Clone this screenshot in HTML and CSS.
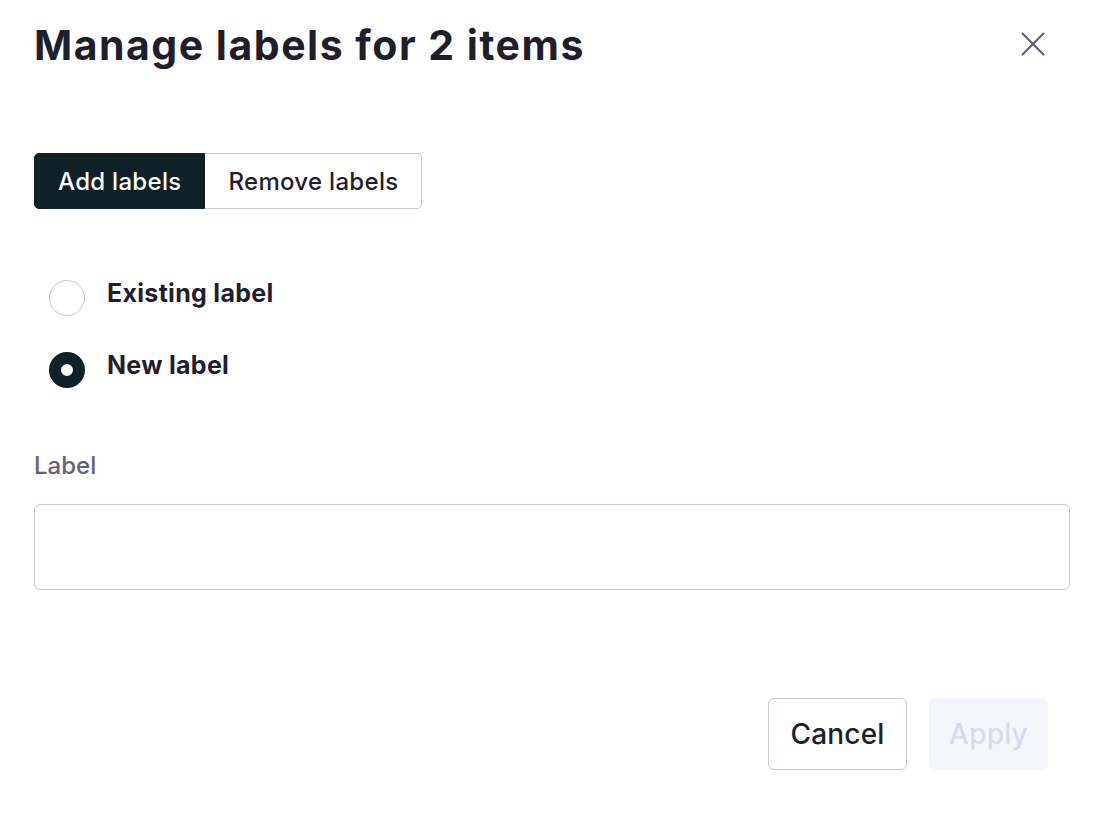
FILE: index.html
```html
<!DOCTYPE html>
<html lang="en">
<head>
    <meta charset="UTF-8">
    <title>Manage labels</title>
    <link rel="stylesheet" href="styles.css">
</head>
<body>
    <div class="modal">
        <!-- Header -->
        <div class="modal-header">
            <h1>Manage labels for 2 items</h1>
            <button class="close-btn" aria-label="Close">
                <svg width="24" height="24" viewBox="0 0 24 24" fill="none" stroke="currentColor" stroke-width="2" stroke-linecap="round">
                    <path d="M1.5 1.5L22.5 22.5M22.5 1.5L1.5 22.5"/>
                </svg>
            </button>
        </div>

        <!-- Mode toggle -->
        <div class="segmented">
            <button class="seg-btn active">Add labels</button>
            <button class="seg-btn">Remove labels</button>
        </div>

        <!-- Radio options -->
        <div class="radio-group">
            <label class="radio-row">
                <input type="radio" name="kind" class="radio">
                <span>Existing label</span>
            </label>
            <label class="radio-row">
                <input type="radio" name="kind" class="radio" checked>
                <span>New label</span>
            </label>
        </div>

        <!-- Label field -->
        <div class="field">
            <label for="labelInput" class="field-label">Label</label>
            <input type="text" id="labelInput" class="text-input">
        </div>

        <!-- Footer -->
        <div class="modal-footer">
            <button class="cancel-btn">Cancel</button>
            <button class="apply-btn" disabled>Apply</button>
        </div>
    </div>
</body>
</html>
```

FILE: styles.css
```css
/* General Reset */
* {
    margin: 0;
    padding: 0;
    box-sizing: border-box;
    font-family: 'Inter', 'Liberation Sans', sans-serif;
}

body, html {
    height: 100%;
    background: #ffffff;
    color: #1f1e2e;
}

.modal {
    width: 1112px;
    padding: 14px 42px 0 34px;
}

/* Header */
.modal-header {
    display: flex;
    justify-content: space-between;
    align-items: center;
    height: 62px;
}

.modal-header h1 {
    font-size: 41px;
    font-weight: 700;
    letter-spacing: 1.5px;
    color: #1f1e2e;
}

.close-btn {
    display: flex;
    border: none;
    background: none;
    color: #5c5a7d;
    width: 24px;
    height: 24px;
    margin-right: 25px;
    margin-top: -2px;
    cursor: pointer;
}

/* Segmented toggle */
.segmented {
    display: inline-flex;
    margin-top: 77px;
}

.seg-btn {
    height: 56px;
    font-size: 24px;
    font-weight: 500;
    letter-spacing: 0.3px;
    color: #1f1e2e;
    background: #ffffff;
    border: 1px solid #c6c4d8;
    border-left: none;
    border-radius: 0 5px 5px 0;
    padding: 0 23px;
    cursor: pointer;
}

.seg-btn.active {
    background: #102228;
    color: #ffffff;
    border: 1px solid #102228;
    border-radius: 5px 0 0 5px;
}

/* Radios */
.radio-group {
    display: flex;
    flex-direction: column;
    gap: 36px;
    margin-top: 71px;
    padding-left: 15px;
}

.radio-row {
    display: flex;
    align-items: center;
    gap: 22px;
    font-size: 25px;
    font-weight: 700;
    letter-spacing: 0.3px;
    color: #1f1e2e;
    height: 36px;
}

.radio-row span {
    margin-top: -10px;
}

.radio {
    appearance: none;
    width: 36px;
    height: 36px;
    border-radius: 50%;
    border: 1px solid #c6c4d8;
    background: #ffffff;
}

.radio:checked {
    border: 12px solid #102228;
}

/* Field */
.field {
    margin-top: 63px;
    display: flex;
    flex-direction: column;
}

.field-label {
    font-size: 24px;
    font-weight: 500;
    color: #63617f;
    margin-bottom: 24px;
}

.text-input {
    width: 1036px;
    height: 86px;
    border: 1px solid #c6c4d8;
    border-radius: 6px;
    font-size: 22px;
    padding: 0 20px;
}

/* Footer */
.modal-footer {
    display: flex;
    justify-content: flex-end;
    gap: 22px;
    margin-top: 108px;
    padding-right: 22px;
}

.cancel-btn, .apply-btn {
    height: 72px;
    font-size: 28px;
    font-weight: 500;
    letter-spacing: 0.2px;
    border-radius: 6px;
    padding: 0 20px;
}

.cancel-btn {
    background: #ffffff;
    color: #1f1e2e;
    border: 1px solid #c6c4d8;
    width: 139px;
    cursor: pointer;
}

.apply-btn {
    background: #f5f6fc;
    color: #d7d9ec;
    border: none;
    width: 119px;
    cursor: not-allowed;
}
```
